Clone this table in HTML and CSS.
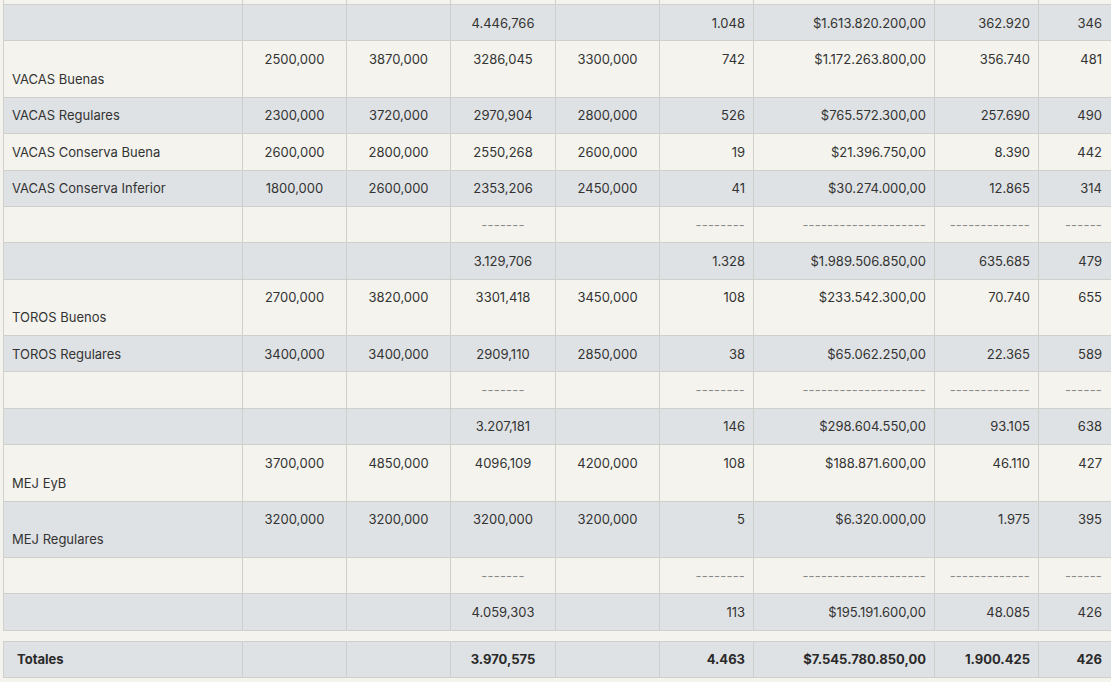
FILE: index.html
```html
<!DOCTYPE html>
<html lang="es">
<head>
<meta charset="utf-8">
<title>Resumen de hacienda</title>
<link rel="stylesheet" href="styles.css">
</head>
<body>
<div class="wrap">
<table class="grid">
<colgroup>
<col class="c1"><col class="c2"><col class="c3"><col class="c4"><col class="c5"><col class="c6"><col class="c7"><col class="c8"><col class="c9">
</colgroup>
<tbody>
<tr class="light sliver"><td></td><td></td><td></td><td></td><td></td><td></td><td></td><td></td><td></td></tr>
<tr class="gray"><td></td><td></td><td></td><td class="ctr">4.446,766</td><td></td><td class="num">1.048</td><td class="num">$1.613.820.200,00</td><td class="num">362.920</td><td class="num">346</td></tr>
<tr class="light"><td class="label"><br>VACAS Buenas</td><td class="ctr">2500,000</td><td class="ctr">3870,000</td><td class="ctr">3286,045</td><td class="ctr">3300,000</td><td class="num">742</td><td class="num">$1.172.263.800,00</td><td class="num">356.740</td><td class="num">481</td></tr>
<tr class="gray"><td class="label">VACAS Regulares</td><td class="ctr">2300,000</td><td class="ctr">3720,000</td><td class="ctr">2970,904</td><td class="ctr">2800,000</td><td class="num">526</td><td class="num">$765.572.300,00</td><td class="num">257.690</td><td class="num">490</td></tr>
<tr class="light"><td class="label">VACAS Conserva Buena</td><td class="ctr">2600,000</td><td class="ctr">2800,000</td><td class="ctr">2550,268</td><td class="ctr">2600,000</td><td class="num">19</td><td class="num">$21.396.750,00</td><td class="num">8.390</td><td class="num">442</td></tr>
<tr class="gray"><td class="label">VACAS Conserva Inferior</td><td class="ctr">1800,000</td><td class="ctr">2600,000</td><td class="ctr">2353,206</td><td class="ctr">2450,000</td><td class="num">41</td><td class="num">$30.274.000,00</td><td class="num">12.865</td><td class="num">314</td></tr>
<tr class="light dash"><td></td><td></td><td></td><td class="ctr">-------</td><td></td><td class="num">--------</td><td class="num">--------------------</td><td class="num">-------------</td><td class="num">------</td></tr>
<tr class="gray"><td></td><td></td><td></td><td class="ctr">3.129,706</td><td></td><td class="num">1.328</td><td class="num">$1.989.506.850,00</td><td class="num">635.685</td><td class="num">479</td></tr>
<tr class="light"><td class="label"><br>TOROS Buenos</td><td class="ctr">2700,000</td><td class="ctr">3820,000</td><td class="ctr">3301,418</td><td class="ctr">3450,000</td><td class="num">108</td><td class="num">$233.542.300,00</td><td class="num">70.740</td><td class="num">655</td></tr>
<tr class="gray"><td class="label">TOROS Regulares</td><td class="ctr">3400,000</td><td class="ctr">3400,000</td><td class="ctr">2909,110</td><td class="ctr">2850,000</td><td class="num">38</td><td class="num">$65.062.250,00</td><td class="num">22.365</td><td class="num">589</td></tr>
<tr class="light dash"><td></td><td></td><td></td><td class="ctr">-------</td><td></td><td class="num">--------</td><td class="num">--------------------</td><td class="num">-------------</td><td class="num">------</td></tr>
<tr class="gray"><td></td><td></td><td></td><td class="ctr">3.207,181</td><td></td><td class="num">146</td><td class="num">$298.604.550,00</td><td class="num">93.105</td><td class="num">638</td></tr>
<tr class="light"><td class="label"><br>MEJ EyB</td><td class="ctr">3700,000</td><td class="ctr">4850,000</td><td class="ctr">4096,109</td><td class="ctr">4200,000</td><td class="num">108</td><td class="num">$188.871.600,00</td><td class="num">46.110</td><td class="num">427</td></tr>
<tr class="gray"><td class="label"><br>MEJ Regulares</td><td class="ctr">3200,000</td><td class="ctr">3200,000</td><td class="ctr">3200,000</td><td class="ctr">3200,000</td><td class="num">5</td><td class="num">$6.320.000,00</td><td class="num">1.975</td><td class="num">395</td></tr>
<tr class="light dash"><td></td><td></td><td></td><td class="ctr">-------</td><td></td><td class="num">--------</td><td class="num">--------------------</td><td class="num">-------------</td><td class="num">------</td></tr>
<tr class="gray"><td></td><td></td><td></td><td class="ctr">4.059,303</td><td></td><td class="num">113</td><td class="num">$195.191.600,00</td><td class="num">48.085</td><td class="num">426</td></tr>
</tbody>
</table>
<table class="grid totals">
<colgroup>
<col class="c1"><col class="c2"><col class="c3"><col class="c4"><col class="c5"><col class="c6"><col class="c7"><col class="c8"><col class="c9">
</colgroup>
<tbody>
<tr class="gray"><td class="label tot">Totales</td><td></td><td></td><td class="ctr">3.970,575</td><td></td><td class="num">4.463</td><td class="num">$7.545.780.850,00</td><td class="num">1.900.425</td><td class="num">426</td></tr>
</tbody>
</table>
</div>
</body>
</html>
```

FILE: styles.css
```css
html, body {
  margin: 0;
  padding: 0;
  background: #f4f3ee;
  overflow: hidden;
}

.wrap {
  padding-left: 3px;
  width: 1112px;
  font-family: Inter, "Noto Sans", sans-serif;
  font-size: 13px;
  color: #333;
}

.grid {
  border-collapse: collapse;
  table-layout: fixed;
  width: 1112px;
}

.c1 { width: 239px; }
.c2 { width: 104px; }
.c3 { width: 104px; }
.c4 { width: 105px; }
.c5 { width: 104px; }
.c6 { width: 94px; }
.c7 { width: 181px; }
.c8 { width: 104px; }
.c9 { width: 77px; }

.grid td {
  border: 1px solid #cfcfcc;
  padding: 7.7px 8px;
  line-height: 20px;
  vertical-align: top;
  white-space: nowrap;
}

.grid td:last-child {
  padding-right: 13px;
}

.light td { background: #f4f3ee; }
.gray td { background: #dfe2e4; }

.grid .sliver td {
  padding: 0;
  height: 4px;
  line-height: 0;
  border-top: none;
}

.num { text-align: right; }
.ctr { text-align: center; }

.dash td { color: #8a8a8a; letter-spacing: 0.2px; }

.totals {
  margin-top: 10px;
}

.totals td {
  font-weight: 700;
  color: #2a2a2a;
}

.tot { padding-left: 13px !important; }
```
